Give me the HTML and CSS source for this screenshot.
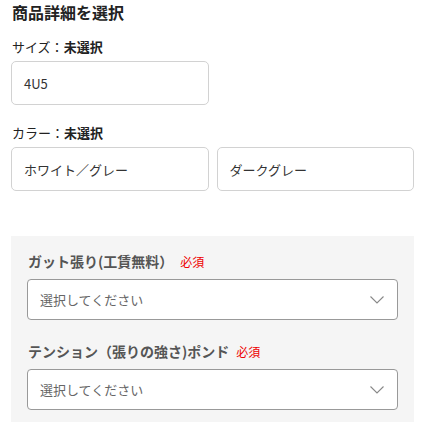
FILE: index.html
```html
<!DOCTYPE html>
<html lang="ja">
<head>
<meta charset="utf-8">
<link rel="stylesheet" href="styles.css">
</head>
<body>
<div class="page">
  <h2 class="title">商品詳細を選択</h2>
  <div class="group">
    <div class="label">サイズ：<b>未選択</b></div>
    <div class="options">
      <div class="opt">4U5</div>
    </div>
  </div>
  <div class="group">
    <div class="label">カラー：<b>未選択</b></div>
    <div class="options">
      <div class="opt">ホワイト／グレー</div>
      <div class="opt">ダークグレー</div>
    </div>
  </div>
  <div class="panel">
    <div class="field">
      <div class="flabel">ガット張り(工賃無料）<span class="req">必須</span></div>
      <div class="select">
        <span>選択してください</span>
        <svg class="chev" width="14" height="8" viewBox="0 0 14 8"><path d="M0.5 0.5 L7 7 L13.5 0.5" fill="none" stroke="#888" stroke-width="1.1"/></svg>
      </div>
    </div>
    <div class="field">
      <div class="flabel">テンション（張りの強さ)ポンド<span class="req">必須</span></div>
      <div class="select">
        <span>選択してください</span>
        <svg class="chev" width="14" height="8" viewBox="0 0 14 8"><path d="M0.5 0.5 L7 7 L13.5 0.5" fill="none" stroke="#888" stroke-width="1.1"/></svg>
      </div>
    </div>
  </div>
</div>
</body>
</html>
```
FILE: styles.css
```css
* { box-sizing: border-box; }
html, body { margin: 0; padding: 0; background: #fff; }
body {
  font-family: "Noto Sans CJK JP", "Noto Sans", sans-serif;
  color: #222;
}
.page {
  width: 403px;
  margin-left: 11px;
}
.title {
  margin: 0;
  font-size: 16px;
  line-height: 24px;
  font-weight: 700;
  color: #222;
  padding-left: 1px;
}
.group { margin-top: 13px; }
.group + .group { margin-top: 18px; }
.label {
  font-size: 13px;
  line-height: 20px;
  color: #222;
  padding-left: 1px;
}
.label b { font-weight: 700; }
.options {
  display: flex;
  gap: 8px;
  margin-top: 4px;
}
.opt {
  width: 198px;
  height: 44px;
  border: 1px solid #d2d2d2;
  border-radius: 5px;
  padding: 0 12px;
  display: flex;
  align-items: center;
  font-size: 13px;
  color: #333;
}
.panel {
  margin-top: 45px;
  background: #f5f5f5;
  padding: 15px 16px 12px;
}
.field + .field { margin-top: 21px; }
.flabel {
  height: 20px;
  font-size: 14px;
  line-height: 20px;
  font-weight: 700;
  color: #555;
  padding-left: 1px;
}
.req {
  color: #e00;
  font-size: 12px;
  line-height: 1;
  font-weight: 400;
  margin-left: 7px;
}
.select {
  margin-top: 8px;
  height: 41px;
  background: #fff;
  border: 1px solid #999;
  border-radius: 4px;
  display: flex;
  align-items: center;
  justify-content: space-between;
  padding: 0 13px 0 12px;
  font-size: 13px;
  color: #666;
}
.chev { display: block; }
```
